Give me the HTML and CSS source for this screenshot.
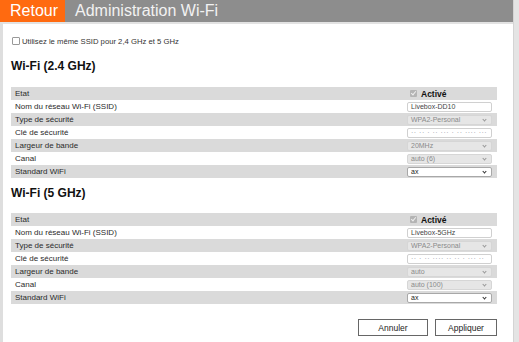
FILE: index.html
```html
<!DOCTYPE html>
<html lang="fr">
<head>
    <meta charset="UTF-8">
    <title>Administration Wi-Fi</title>
    <link rel="stylesheet" href="styles.css">
</head>
<body>
    <div class="page">
        <div class="topbar">
            <div class="back">Retour</div>
            <div class="title">Administration Wi-Fi</div>
        </div>
        <div class="content">
            <label class="same-ssid"><span class="box"></span>Utilisez le même SSID pour 2,4 GHz et 5 GHz</label>

            <h2>Wi-Fi (2.4 GHz)</h2>
            <div class="table">
                <div class="row shade">
                    <div class="label">Etat</div>
                    <div class="value"><span class="check"></span><b>Activé</b></div>
                </div>
                <div class="row">
                    <div class="label">Nom du réseau Wi-Fi (SSID)</div>
                    <div class="value"><div class="field">Livebox-DD10</div></div>
                </div>
                <div class="row shade">
                    <div class="label">Type de sécurité</div>
                    <div class="value"><div class="field select off">WPA2-Personal</div></div>
                </div>
                <div class="row">
                    <div class="label">Clé de sécurité</div>
                    <div class="value"><div class="field masked">·· ·· · ·· ··· · ·· ···· ···</div></div>
                </div>
                <div class="row shade">
                    <div class="label">Largeur de bande</div>
                    <div class="value"><div class="field select off">20MHz</div></div>
                </div>
                <div class="row">
                    <div class="label">Canal</div>
                    <div class="value"><div class="field select off">auto (6)</div></div>
                </div>
                <div class="row shade">
                    <div class="label">Standard WiFi</div>
                    <div class="value"><div class="field select on">ax</div></div>
                </div>
            </div>

            <h2 class="second">Wi-Fi (5 GHz)</h2>
            <div class="table">
                <div class="row shade">
                    <div class="label">Etat</div>
                    <div class="value"><span class="check"></span><b>Activé</b></div>
                </div>
                <div class="row">
                    <div class="label">Nom du réseau Wi-Fi (SSID)</div>
                    <div class="value"><div class="field">Livebox-5GHz</div></div>
                </div>
                <div class="row shade">
                    <div class="label">Type de sécurité</div>
                    <div class="value"><div class="field select off">WPA2-Personal</div></div>
                </div>
                <div class="row">
                    <div class="label">Clé de sécurité</div>
                    <div class="value"><div class="field masked">·· · ·· ···· ·· ·· · ··· ··</div></div>
                </div>
                <div class="row shade">
                    <div class="label">Largeur de bande</div>
                    <div class="value"><div class="field select off">auto</div></div>
                </div>
                <div class="row">
                    <div class="label">Canal</div>
                    <div class="value"><div class="field select off">auto (100)</div></div>
                </div>
                <div class="row shade">
                    <div class="label">Standard WiFi</div>
                    <div class="value"><div class="field select on">ax</div></div>
                </div>
            </div>

            <div class="actions">
                <button class="btn">Annuler</button>
                <button class="btn">Appliquer</button>
            </div>
        </div>
    </div>
    <div class="scrollbar"></div>
</body>
</html>
```

FILE: styles.css
```css
body {
    margin: 0;
    display: flex;
    height: 100vh;
    overflow: hidden;
    font-family: 'Liberation Sans', Arial, sans-serif;
    color: #222;
    background: #fff;
}
.page {
    flex: 1;
    display: flex;
    flex-direction: column;
}
.scrollbar {
    width: 5px;
    background: #e4e4e4;
    border-left: 1px solid #d4d4d4;
}
.topbar {
    display: flex;
    height: 22px;
    background: #8d8d8d;
    font-size: 16px;
    line-height: 21px;
}
.topbar .back {
    width: 65px;
    padding-left: 10px;
    box-sizing: border-box;
    background: #ff6a10;
    color: #fff;
}
.topbar .title {
    padding-left: 10px;
    color: #f2f2f2;
}
.content {
    flex: 1;
    border-left: 3px solid #dedede;
    border-top: 2px solid #e2e2e2;
    padding: 12px 16px 0 8px;
}
.same-ssid {
    display: flex;
    align-items: center;
    gap: 2px;
    font-size: 7.7px;
    color: #333;
    height: 10px;
    padding-left: 1px;
}
.same-ssid .box {
    width: 6px;
    height: 6px;
    border: 1px solid #999;
    border-radius: 1px;
    background: #fff;
}
h2 {
    margin: 12px 0 13px;
    font-size: 12px;
    line-height: 16px;
    font-weight: bold;
    color: #111;
}
h2.second {
    margin: 7px 0 12px;
}
.table {
    display: flex;
    flex-direction: column;
}
.row {
    display: flex;
    align-items: center;
    height: 13px;
    font-size: 8px;
    color: #2a2a2a;
}
.row.shade {
    background: #dadada;
}
.label {
    width: 396px;
    padding-left: 4px;
    box-sizing: border-box;
}
.value {
    display: flex;
    align-items: center;
    gap: 4px;
}
.value b {
    font-size: 8.5px;
    color: #111;
}
.check {
    width: 7px;
    height: 7px;
    margin-left: 3px;
    background: #b4b4b4;
    border-radius: 1px;
    position: relative;
}
.check::after {
    content: '';
    position: absolute;
    left: 2px;
    top: 0;
    width: 2px;
    height: 4px;
    border: solid #eee;
    border-width: 0 1px 1px 0;
    transform: rotate(40deg);
}
.field {
    width: 85px;
    height: 10px;
    box-sizing: border-box;
    border: 1px solid #d0d0d0;
    border-radius: 2px;
    background: #fff;
    font-size: 7px;
    line-height: 8px;
    padding-left: 3px;
    color: #444;
    position: relative;
}
.field.masked {
    color: #9a9aa8;
    letter-spacing: 0.5px;
}
.field.select::after {
    content: '';
    position: absolute;
    right: 5px;
    top: 2px;
    width: 2px;
    height: 2px;
    border: solid #999;
    border-width: 0 1px 1px 0;
    transform: rotate(45deg);
}
.field.off {
    background: #e6e6e6;
    color: #8a8a8a;
    border-color: #d6d6d6;
}
.field.on {
    border-color: #a8a8a8;
    color: #222;
}
.field.on::after {
    border-color: #333;
}
.actions {
    display: flex;
    justify-content: flex-end;
    gap: 7px;
    margin-top: 15px;
}
.btn {
    height: 17px;
    width: 70px;
    background: #fff;
    border: 1px solid #666;
    font-family: inherit;
    font-size: 8.5px;
    color: #222;
    padding: 0;
}
.btn + .btn {
    width: 62px;
}
```
